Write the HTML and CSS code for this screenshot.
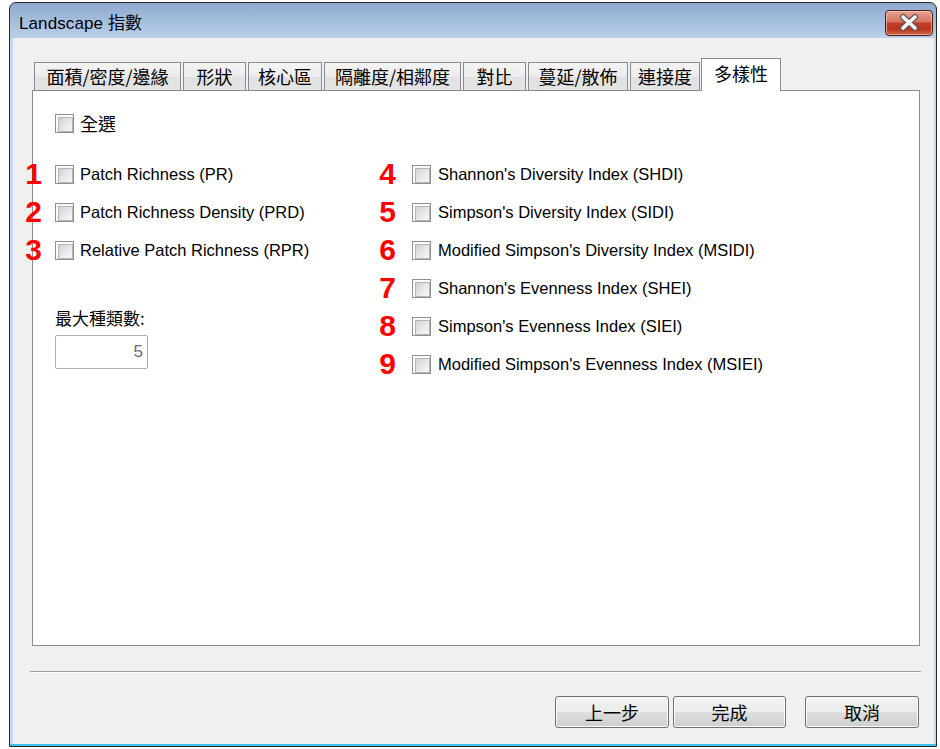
FILE: index.html
```html
<!DOCTYPE html>
<html lang="zh-Hant">
<head>
<meta charset="utf-8">
<title>Landscape 指數</title>
<link rel="stylesheet" href="styles.css">
</head>
<body>
<div class="window">
  <div class="titlebar">
    <span class="title">Landscape 指數</span>
    <div class="close">
      <svg width="46" height="24" viewBox="0 0 46 24">
        <path d="M17 6 L29 17 M29 6 L17 17" stroke="#6a5252" stroke-width="6" stroke-linecap="round" fill="none"/>
        <path d="M17 6 L29 17 M29 6 L17 17" stroke="#f4f4f4" stroke-width="3.6" stroke-linecap="round" fill="none"/>
      </svg>
    </div>
  </div>
  <div class="client">
    <div class="tabs">
      <div class="tab t1">面積/密度/邊緣</div>
      <div class="tab t2">形狀</div>
      <div class="tab t3">核心區</div>
      <div class="tab t4">隔離度/相鄰度</div>
      <div class="tab t5">對比</div>
      <div class="tab t6">蔓延/散佈</div>
      <div class="tab t7">連接度</div>
      <div class="tab active">多樣性</div>
    </div>
    <div class="panel">
      <div class="row all"><span class="box"></span><span class="cjk">全選</span></div>
      <div class="cols">
        <div class="col left">
          <div class="row"><span class="num">1</span><span class="box"></span><span>Patch Richness (PR)</span></div>
          <div class="row"><span class="num">2</span><span class="box"></span><span>Patch Richness Density (PRD)</span></div>
          <div class="row"><span class="num">3</span><span class="box"></span><span>Relative Patch Richness (RPR)</span></div>
          <div class="maxlabel cjk">最大種類數:</div>
          <div class="input">5</div>
        </div>
        <div class="col right">
          <div class="row"><span class="num">4</span><span class="box"></span><span>Shannon's Diversity Index (SHDI)</span></div>
          <div class="row"><span class="num">5</span><span class="box"></span><span>Simpson's Diversity Index (SIDI)</span></div>
          <div class="row"><span class="num">6</span><span class="box"></span><span>Modified Simpson's Diversity Index (MSIDI)</span></div>
          <div class="row"><span class="num">7</span><span class="box"></span><span>Shannon's Evenness Index (SHEI)</span></div>
          <div class="row"><span class="num">8</span><span class="box"></span><span>Simpson's Evenness Index (SIEI)</span></div>
          <div class="row"><span class="num">9</span><span class="box"></span><span>Modified Simpson's Evenness Index (MSIEI)</span></div>
        </div>
      </div>
    </div>
    <div class="sep"></div>
    <div class="buttons">
      <div class="btn b1">上一步</div>
      <div class="btn b2">完成</div>
      <div class="btn b3">取消</div>
    </div>
  </div>
</div>
</body>
</html>
```
FILE: styles.css
```css
* { box-sizing: border-box; }
html, body { margin: 0; padding: 0; background: #ffffff; }
body {
  font-family: "Liberation Sans", "Noto Sans CJK TC", Arial, sans-serif;
  font-size: 16.5px;
  color: #000;
}
.window {
  margin: 2px 0 0 9px;
  width: 928px;
  height: 745px;
  border: 1px solid #2a2a2a;
  border-radius: 7px 7px 0 0;
  background:
    linear-gradient(to top, #3cc3ea 0, #3cc3ea 2px, transparent 2px),
    linear-gradient(#8ea9ce, #b3cbe7 30px, #c5d9ee 40px, #c5d9ee);
  padding: 0 2px 2px 3px;
  display: flex;
  flex-direction: column;
  overflow: hidden;
}
.titlebar {
  height: 35px;
  flex: none;
  display: flex;
  align-items: center;
  justify-content: space-between;
  padding-left: 6px;
}
.title {
  font-size: 17px;
  color: #000;
  padding-top: 2px;
  letter-spacing: 0.1px;
}
.close {
  width: 48px;
  height: 26px;
  margin-top: 4px;
  margin-right: 1px;
  border: 1px solid #4c1c1c;
  border-radius: 4px;
  background: linear-gradient(#e7a592, #d5735e 45%, #c0402a 50%, #b8351f 75%, #d06648);
  box-shadow: inset 0 0 0 1px rgba(255, 220, 210, 0.55);
  display: flex;
  align-items: center;
  justify-content: center;
}
.close svg { display: block; }
.client {
  flex: 1;
  background: #f0f0f0;
  padding: 20px 14px 0 19px;
  display: flex;
  flex-direction: column;
}
.tabs {
  height: 32px;
  display: flex;
  align-items: flex-end;
  padding-left: 2px;
  position: relative;
  z-index: 2;
}
.tab {
  height: 28px;
  border: 1px solid #898c95;
  border-bottom: none;
  margin-right: 2px;
  background: linear-gradient(#f4f4f4, #ececec 50%, #e1e1e1 52%, #e4e4e4);
  font-family: "Noto Sans CJK TC", "Liberation Sans", sans-serif;
  font-size: 18px;
  line-height: 26px;
  text-align: center;
  white-space: nowrap;
}
.t1 { width: 147px; }
.t2 { width: 63px; }
.t3 { width: 74px; }
.t4 { width: 137px; }
.t5 { width: 63px; }
.t6 { width: 100px; }
.t7 { width: 70px; margin-right: 1px; }
.tab.active {
  width: 80px;
  height: 33px;
  margin-bottom: -1px;
  background: #ffffff;
  line-height: 28px;
}
.panel {
  flex: none;
  height: 556px;
  background: #ffffff;
  border: 1px solid #898c95;
  padding: 13px 0 0 22px;
  position: relative;
}
.row {
  height: 38px;
  display: flex;
  align-items: center;
  gap: 6px;
  position: relative;
  white-space: nowrap;
}
.row.all { margin-bottom: 13px; }
.cjk {
  font-family: "Noto Sans CJK TC", "Liberation Sans", sans-serif;
  font-size: 18px;
}
.box {
  width: 19px;
  height: 19px;
  flex: none;
  border: 1px solid #8f8f8f;
  background: #fbfbfb;
  padding: 2px;
}
.box::before {
  content: "";
  display: block;
  width: 100%;
  height: 100%;
  border: 1px solid #b4b6b9;
  background: linear-gradient(135deg, #cfd1d4, #e8e9ea 55%, #f7f7f7);
}
.cols {
  display: grid;
  grid-template-columns: 357px 1fr;
}
.num {
  position: absolute;
  right: 100%;
  margin-right: 13px;
  font-family: "Liberation Sans", Arial, sans-serif;
  font-weight: bold;
  font-size: 30px;
  color: #ff0000;
  line-height: 38px;
}
.col.right .num { margin-right: 16px; }
.col.right .row { gap: 7px; }
.maxlabel {
  margin-top: 37px;
  line-height: 24px;
  font-size: 17px;
}
.input {
  margin-top: 5px;
  width: 93px;
  height: 34px;
  border: 1px solid #abadb3;
  border-radius: 2px;
  background: #ffffff;
  color: #6d6d6d;
  text-align: right;
  padding-right: 4px;
  line-height: 32px;
  font-size: 17px;
}
.sep {
  margin: 25px -1px 0 -2px;
  height: 2px;
  border-top: 1px solid #a0a0a0;
  border-bottom: 1px solid #ffffff;
}
.buttons {
  margin-top: 23px;
  display: flex;
  justify-content: flex-end;
  padding-right: 1px;
}
.btn {
  height: 32px;
  border: 1px solid #707070;
  border-radius: 3px;
  background: linear-gradient(#f2f2f2, #ebebeb 50%, #dddddd 52%, #cfcfcf);
  box-shadow: inset 0 0 0 1px #fbfbfb;
  font-family: "Noto Sans CJK TC", "Liberation Sans", sans-serif;
  font-size: 18px;
  line-height: 30px;
  text-align: center;
}
.b1 { width: 114px; }
.b2 { width: 113px; margin-left: 4px; }
.b3 { width: 114px; margin-left: 19px; }
```
